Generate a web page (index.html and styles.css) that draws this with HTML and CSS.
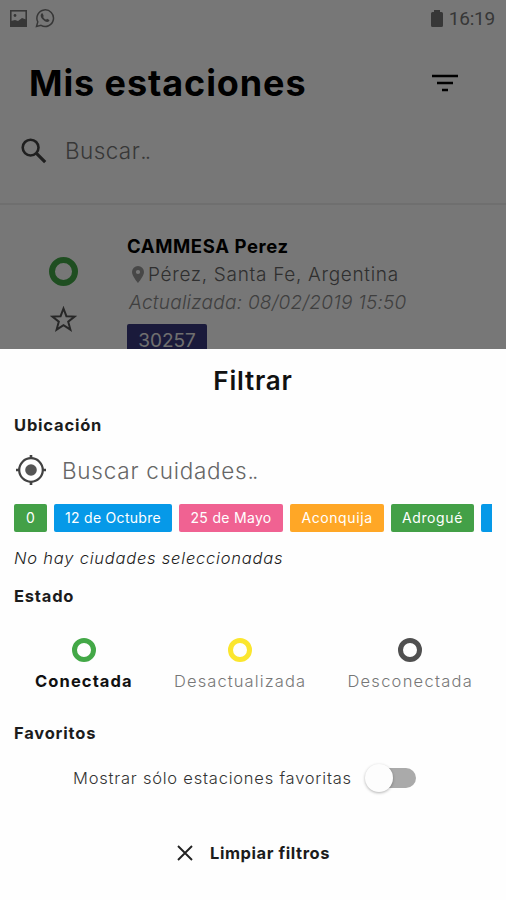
FILE: index.html
```html
<!DOCTYPE html>
<html lang="es">
  <head>
    <meta charset="UTF-8" />
    <title>Mis estaciones</title>
    <link rel="stylesheet" href="styles.css">
  </head>
  <body>
    <div class="app">
      <div class="status-bar">
        <svg class="status-image" width="17" height="17" viewBox="0 0 17 17">
          <rect x="0.8" y="0.8" width="15.4" height="15.4" fill="none" stroke="currentColor" stroke-width="1.6" />
          <circle cx="5" cy="5.5" r="1.4" fill="currentColor" />
          <path d="M1 11l4-1 3 1 4-3 4 1.500V16H1z" fill="currentColor" />
        </svg>
        <svg width="20" height="20" viewBox="0 0 20 20">
          <path d="M1.5 18.5l1.3-4.6A8.3 8.3 0 1 1 6 17.3z" fill="none" stroke="currentColor" stroke-width="1.5" />
          <path d="M6.5 5.500C5 7 5.500 9 7.500 11.300C9.800 13.800 12.500 14.700 14 13.200C14.600 12.500 14.500 12 14 11.700L12.400 10.900C11.900 10.700 11.700 10.800 11.200 11.700C9.900 11.300 8.800 10.200 8.100 9C8.800 8.300 8.700 8 8.500 7.500L7.800 5.800C7.500 5.200 7 5.200 6.500 5.500Z" fill="currentColor" />
        </svg>
        <svg class="battery" width="12" height="17" viewBox="0 0 12 17">
          <path d="M3 0h6v2h1.500Q12 2 12 3.500V15.500Q12 17 10.500 17h-9Q0 17 0 15.500v-12Q0 2 1.500 2H3z" fill="currentColor" />
        </svg>
        <span class="clock">16:19</span>
      </div>

      <div class="title-bar">
        <h1>Mis estaciones</h1>
        <svg width="26" height="18" viewBox="0 0 26 18">
          <path d="M0 2h26M5 9h16M10 16h6" stroke="#000" stroke-width="2.600" />
        </svg>
      </div>

      <div class="search">
        <svg width="26" height="26" viewBox="0 0 26 26" fill="none" stroke="#444" stroke-width="2.600">
          <circle cx="9.600" cy="9.600" r="7.900" />
          <path d="M15.200 15.200l9 9" stroke-width="3.200" />
        </svg>
        <span class="search-text">Buscar<span class="dots">..</span></span>
      </div>

      <div class="station">
        <div class="station-icons">
          <span class="ring ring-large green"></span>
          <svg width="27" height="26" viewBox="0 0 27 26">
            <path d="M13.500 2.500l2.900 7.700 8.200.4-6.400 5.100 2.200 7.900-6.900-4.500-6.900 4.500 2.200-7.900-6.400-5.100 8.200-.4z" fill="none" stroke="#555" stroke-width="2" />
          </svg>
        </div>
        <div class="station-info">
          <div class="station-name">CAMMESA Perez</div>
          <div class="station-place">
            <svg width="12" height="17" viewBox="0 0 12 17">
              <path d="M6 0a6 6 0 0 0-6 6c0 4.200 6 11 6 11s6-6.800 6-11a6 6 0 0 0-6-6zm0 3.900a2.100 2.100 0 1 1 0 4.200 2.100 2.100 0 0 1 0-4.200z" fill="#999" />
            </svg>
            <span>Pérez, Santa Fe, Argentina</span>
          </div>
          <div class="station-date">Actualizada: 08/02/2019 15:50</div>
          <div class="station-code">30257</div>
        </div>
      </div>
      <div class="overlay"></div>
    </div>

    <div class="sheet">
      <h2>Filtrar</h2>

      <h3 class="ubicacion">Ubicación</h3>
      <div class="city-search">
        <svg width="32" height="32" viewBox="0 0 32 32" fill="none" stroke="#424242" stroke-width="2.200">
          <circle cx="16" cy="16" r="11.800" />
          <circle cx="16" cy="16" r="5.800" fill="#555" stroke="none" />
          <path d="M16 1v4M16 27v4M1 16h4M27 16h4" stroke-width="2.600" />
        </svg>
        <span class="city-text">Buscar cuidades<span class="dots">..</span></span>
      </div>
      <div class="tags">
        <span class="tag tag-zero">0</span>
        <span class="tag tag-octubre">12 de Octubre</span>
        <span class="tag tag-mayo">25 de Mayo</span>
        <span class="tag tag-aconquija">Aconquija</span>
        <span class="tag tag-adrogue">Adrogué</span>
        <span class="tag tag-next"></span>
      </div>
      <p class="empty">No hay ciudades seleccionadas</p>

      <h3 class="estado">Estado</h3>
      <div class="states">
        <div class="state active">
          <span class="ring green"></span>
          <span class="conectada">Conectada</span>
        </div>
        <div class="state">
          <span class="ring yellow"></span>
          <span class="desactualizada">Desactualizada</span>
        </div>
        <div class="state">
          <span class="ring gray"></span>
          <span class="desconectada">Desconectada</span>
        </div>
      </div>

      <h3 class="favoritos">Favoritos</h3>
      <div class="favorite-row">
        <span>Mostrar sólo estaciones favoritas</span>
        <div class="switch"><div class="knob"></div></div>
      </div>

      <div class="clear">
        <svg width="16" height="16" viewBox="0 0 16 16">
          <path d="M1 1l14 14M15 1L1 15" stroke="#222" stroke-width="1.900" />
        </svg>
        <span>Limpiar filtros</span>
      </div>
    </div>
  </body>
</html>
```
FILE: styles.css
```css
* {
  box-sizing: border-box;
}
body {
  margin: 0;
  background-color: #fefefe;
  font-family: Inter, "Open Sans", sans-serif;
  color: #1c1c1c;
  white-space: nowrap;
}
h1, h2, h3, p {
  margin: 0;
}
svg {
  display: block;
  flex: none;
}
.app {
  position: relative;
  height: 349px;
  overflow: hidden;
  background-color: white;
}
.overlay {
  position: absolute;
  inset: 0;
  background-color: rgba(0, 0, 0, 0.535);
}
.status-bar {
  display: flex;
  align-items: center;
  height: 36px;
  padding: 0 11px 0 10px;
  color: #777;
}
.status-image {
  margin-right: 8px;
}
.battery {
  margin-left: auto;
  margin-right: 6px;
}
.clock {
  font-family: Roboto, sans-serif;
  font-size: 19px;
  letter-spacing: -0.2px;
}
.title-bar {
  display: flex;
  align-items: center;
  justify-content: space-between;
  height: 94px;
  padding: 0 48px 0 29px;
}
h1 {
  font-size: 36px;
  line-height: 44px;
  font-weight: 700;
  letter-spacing: 0.9px;
  color: #000;
}
.search {
  display: flex;
  align-items: center;
  gap: 18px;
  height: 75px;
  padding: 0 21px 32px;
  border-bottom: 2px solid #eee;
}
.search-text {
  font-size: 22.5px;
  font-weight: 300;
  letter-spacing: 0.4px;
  color: #777;
}
.dots {
  letter-spacing: -1.8px;
}
.station {
  display: flex;
}
.station-icons {
  display: flex;
  flex-direction: column;
  align-items: center;
  gap: 20px;
  width: 127px;
  padding-top: 52px;
}
.ring {
  width: 24px;
  height: 24px;
  border: 5px solid;
  border-radius: 50%;
}
.ring-large {
  width: 29px;
  height: 29px;
  border-width: 6px;
}
.green {
  border-color: #43a847;
}
.yellow {
  border-color: #fbe62e;
}
.gray {
  border-color: #505050;
}
.station-info {
  padding-top: 27px;
  font-size: 19px;
  line-height: 28px;
}
.station-name {
  font-size: 18.5px;
  font-weight: 700;
  letter-spacing: 0.6px;
  color: #000;
}
.station-place {
  display: flex;
  align-items: center;
  gap: 4px;
  height: 29px;
  padding-left: 5px;
  font-weight: 300;
  letter-spacing: 0.68px;
  color: #666;
}
.station-date {
  padding-left: 2px;
  font-style: italic;
  font-weight: 300;
  letter-spacing: 0.25px;
  color: #888;
}
.station-code {
  width: 80px;
  height: 34px;
  margin-top: 7px;
  padding-top: 3px;
  border-radius: 2px;
  background-color: #38397e;
  color: #eee;
  text-align: center;
}
.sheet {
  height: 551px;
  padding: 16px 14px 0;
  overflow: hidden;
}
h2 {
  font-size: 26px;
  line-height: 32px;
  font-weight: 600;
  letter-spacing: 0.8px;
  text-align: center;
  color: #111;
}
h3 {
  font-size: 16.5px;
  line-height: 24px;
  font-weight: 700;
  letter-spacing: 0.8px;
}
.ubicacion {
  margin-top: 16px;
}
.city-search {
  display: flex;
  align-items: center;
  gap: 15px;
  height: 32px;
  margin-top: 17px;
  padding-left: 1px;
}
.city-text {
  font-size: 22.5px;
  font-weight: 300;
  letter-spacing: 0.75px;
  color: #666;
}
.city-text .dots {
  letter-spacing: -1.8px;
}
.tags {
  display: flex;
  gap: 7px;
  margin-top: 18px;
  overflow: hidden;
}
.tag {
  flex: none;
  height: 28px;
  border-radius: 2px;
  color: white;
  font-size: 14px;
  line-height: 27px;
  letter-spacing: 0.3px;
  text-align: center;
}
.tag-zero {
  width: 33px;
  background-color: #43a047;
}
.tag-octubre {
  width: 118px;
  background-color: #0699e8;
}
.tag-mayo {
  width: 104px;
  background-color: #f06292;
}
.tag-aconquija {
  width: 94px;
  letter-spacing: 0.6px;
  background-color: #ffa726;
}
.tag-adrogue {
  width: 83px;
  letter-spacing: 0.6px;
  background-color: #43a047;
}
.tag-next {
  width: 60px;
  background-color: #0699e8;
}
.empty {
  margin-top: 14px;
  font-size: 16.5px;
  line-height: 24px;
  font-style: italic;
  font-weight: 300;
  letter-spacing: 0.78px;
}
.estado {
  margin-top: 14px;
}
.states {
  display: flex;
  justify-content: space-between;
  padding: 30px 19px 0 21px;
}
.state {
  display: flex;
  flex-direction: column;
  align-items: center;
  gap: 7px;
  font-size: 16.5px;
  line-height: 24px;
  font-weight: 300;
  letter-spacing: 1.1px;
  color: #777;
}
.active {
  font-weight: 700;
  color: #111;
}
.desconectada {
  letter-spacing: 1.25px;
}
.favoritos {
  margin-top: 28px;
}
.favorite-row {
  display: flex;
  align-items: center;
  gap: 13px;
  height: 32px;
  margin-top: 17px;
  padding-left: 59px;
  font-size: 16.5px;
  font-weight: 300;
  letter-spacing: 0.78px;
  color: #333;
}
.switch {
  display: flex;
  align-items: center;
  width: 51px;
  height: 20px;
  border-radius: 10px;
  background: linear-gradient(to right, transparent 14px, #aaa 14px);
}
.knob {
  width: 28px;
  height: 28px;
  flex: none;
  border-radius: 50%;
  background-color: #fdfdfd;
  box-shadow: 0 1px 3px rgba(0, 0, 0, 0.3);
}
.clear {
  display: flex;
  align-items: center;
  gap: 17px;
  height: 24px;
  margin-top: 47px;
  padding-left: 163px;
  font-size: 16.5px;
  font-weight: 700;
  letter-spacing: 0.57px;
}
```
